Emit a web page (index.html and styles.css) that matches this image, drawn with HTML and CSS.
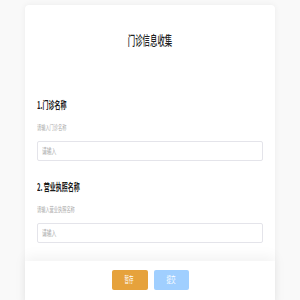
FILE: index.html
```html
<!DOCTYPE html>
<html lang="zh">
<head>
<meta charset="utf-8">
<link rel="stylesheet" href="styles.css">
</head>
<body>
<div class="card">
  <div class="header"><span class="sq sq-c title">门诊信息收集</span></div>
  <div class="field first">
    <div class="label"><span class="sq">1.门诊名称</span></div>
    <div class="hint"><span class="sq">请输入门诊名称</span></div>
    <div class="input"><span class="sq">请输入</span></div>
  </div>
  <div class="field">
    <div class="label"><span class="sq">2. 营业执照名称</span></div>
    <div class="hint"><span class="sq">请输入营业执照名称</span></div>
    <div class="input"><span class="sq">请输入</span></div>
  </div>
  <div class="footer">
    <button class="btn btn-save"><span class="sq sq-c">暂存</span></button>
    <button class="btn btn-submit"><span class="sq sq-c">提交</span></button>
  </div>
</div>
</body>
</html>
```
FILE: styles.css
```css
html, body {
  margin: 0;
  padding: 0;
  background: #f9f9f9;
  font-family: "Noto Sans CJK SC", "Noto Sans", sans-serif;
  overflow: hidden;
}
.card {
  width: 250px;
  margin: 5px auto 0;
  padding: 0 12px;
  box-sizing: border-box;
  background: #fff;
  border-radius: 4px 4px 0 0;
  box-shadow: 0 0 6px rgba(0,0,0,0.06);
}
.sq {
  display: inline-block;
  transform: scaleX(0.6);
  transform-origin: left center;
  white-space: nowrap;
}
.sq-c { transform-origin: center center; }
.header {
  padding-top: 25px;
  height: 16px;
  line-height: 16px;
  text-align: center;
}
.title {
  font-size: 13px;
  color: #222;
  font-weight: 500;
  transform: scaleX(0.57);
}
.field { margin-top: 20px; }
.field.first { margin-top: 53px; }
.label {
  font-size: 10px;
  line-height: 12px;
  height: 12px;
  color: #1a1a1a;
  font-weight: 700;
}
.hint {
  margin-top: 11px;
  font-size: 7px;
  line-height: 10px;
  height: 10px;
  color: #aaa;
}
.input {
  margin-top: 9px;
  height: 20px;
  box-sizing: border-box;
  border: 1px solid #e4e4ea;
  border-radius: 2px;
  padding-left: 4px;
  font-size: 8px;
  line-height: 18px;
  color: #aaa;
}
.footer {
  margin: 18px -12px 0;
  padding: 9px 0 20px;
  display: flex;
  justify-content: center;
  gap: 6px;
  background: #fff;
  box-shadow: 0 -5px 12px rgba(0,0,0,0.05);
}
.btn {
  width: 36px;
  height: 20px;
  border: none;
  border-radius: 2px;
  padding: 0;
  color: #fff;
  font-family: inherit;
  font-size: 9px;
  line-height: 20px;
}
.btn .sq { transform: scaleX(0.5); }
.btn-save { background: #e6a23c; }
.btn-submit { background: #a0cfff; width: 35px; }
```
